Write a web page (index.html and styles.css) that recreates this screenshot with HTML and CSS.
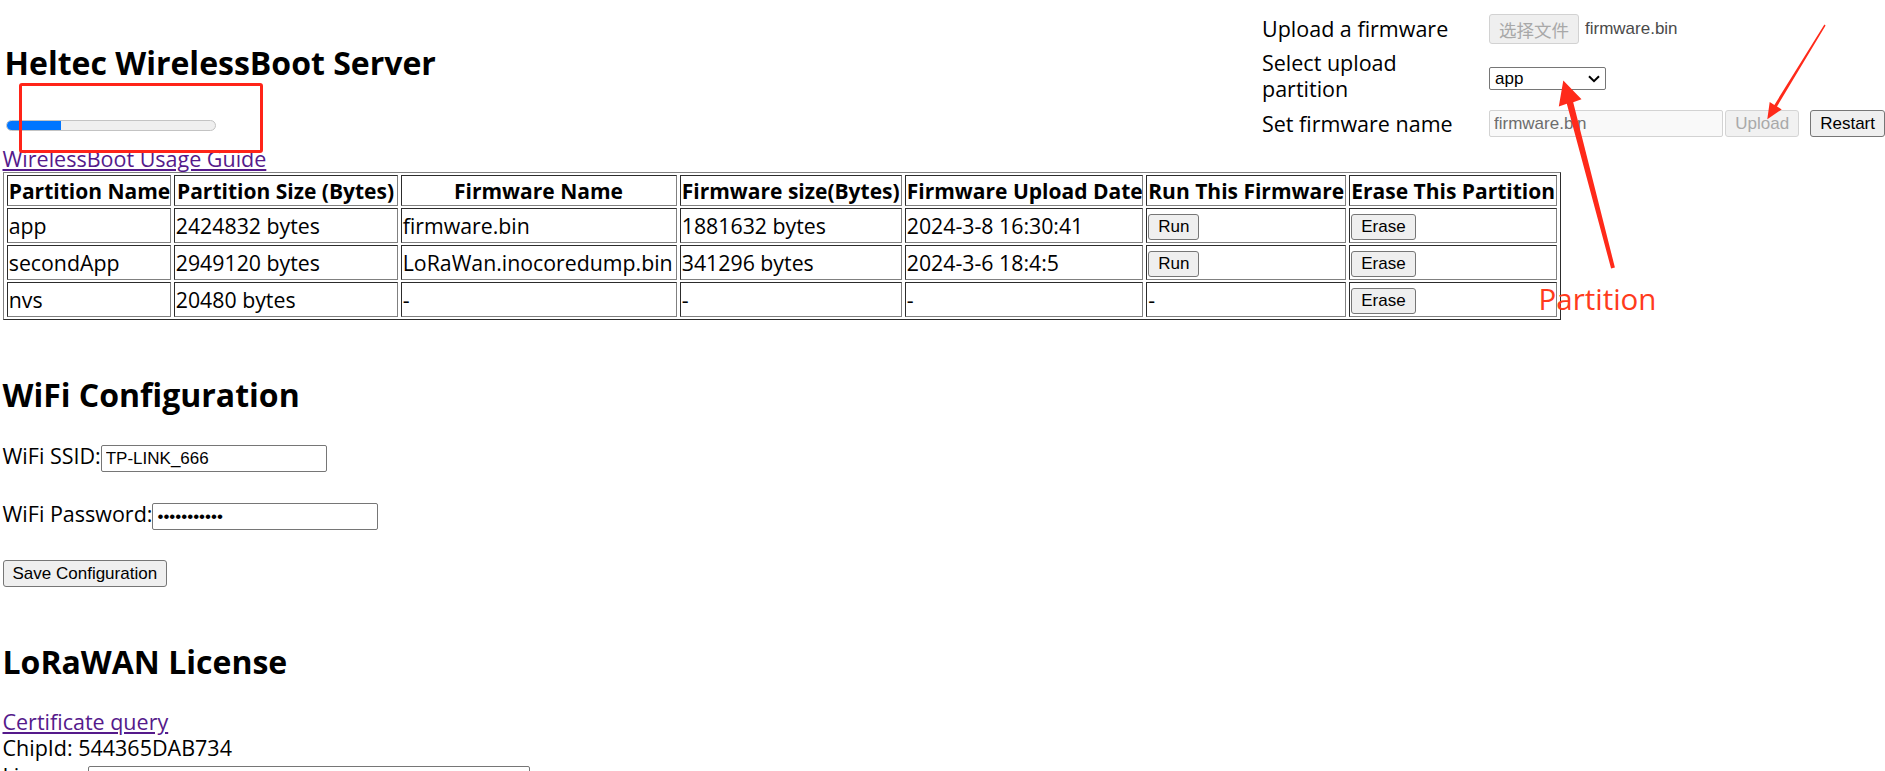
FILE: index.html
```html
<!DOCTYPE html>
<html lang="en">
<head>
<meta charset="utf-8">
<title>Heltec WirelessBoot Server</title>
<link rel="stylesheet" href="styles.css">
</head>
<body>
<div class="page">
  <div class="upload-panel">
    <div class="panel-label">Upload a firmware</div>
    <div class="panel-ctrl">
      <button class="btn-file" disabled>选择文件</button>
      <span class="file-name">firmware.bin</span>
    </div>
    <div class="panel-label">Select upload partition</div>
    <div class="panel-ctrl">
      <span class="select-wrap">
        <select class="partition-select">
          <option>app</option>
          <option>secondApp</option>
        </select>
        <svg class="select-chevron" width="12" height="8" viewBox="0 0 12 8" xmlns="http://www.w3.org/2000/svg"><path d="M1 1.2 L6 6.2 L11 1.2" fill="none" stroke="#000" stroke-width="2"/></svg>
      </span>
    </div>
    <div class="panel-label">Set firmware name</div>
    <div class="panel-ctrl">
      <input class="fw-name" type="text" value="firmware.bin" disabled>
      <button class="btn btn-disabled btn-upload" disabled>Upload</button>
      <button class="btn btn-restart">Restart</button>
    </div>
  </div>

  <h1 class="title">Heltec WirelessBoot Server</h1>
  <div class="progress"><div class="progress-fill" style="width: 26%"></div></div>
  <div class="link-row guide-row"><a class="link" href="#">WirelessBoot Usage Guide</a></div>

  <table class="partitions">
    <thead>
      <tr>
        <th>Partition Name</th>
        <th>Partition Size (Bytes)</th>
        <th>Firmware Name</th>
        <th>Firmware size(Bytes)</th>
        <th>Firmware Upload Date</th>
        <th>Run This Firmware</th>
        <th>Erase This Partition</th>
      </tr>
    </thead>
    <tbody>
      <tr>
        <td>app</td>
        <td>2424832 bytes</td>
        <td>firmware.bin</td>
        <td>1881632 bytes</td>
        <td>2024-3-8 16:30:41</td>
        <td><button class="btn">Run</button></td>
        <td><button class="btn">Erase</button></td>
      </tr>
      <tr>
        <td>secondApp</td>
        <td>2949120 bytes</td>
        <td>LoRaWan.inocoredump.bin</td>
        <td>341296 bytes</td>
        <td>2024-3-6 18:4:5</td>
        <td><button class="btn">Run</button></td>
        <td><button class="btn">Erase</button></td>
      </tr>
      <tr>
        <td>nvs</td>
        <td>20480 bytes</td>
        <td>-</td>
        <td>-</td>
        <td>-</td>
        <td>-</td>
        <td><button class="btn">Erase</button></td>
      </tr>
    </tbody>
  </table>

  <h2 class="section-title wifi-title">WiFi Configuration</h2>
  <div class="field field-ssid"><label>WiFi SSID:</label><input class="text-input" type="text" value="TP-LINK_666"></div>
  <div class="field field-pass"><label>WiFi Password:</label><input class="text-input" type="password" value="12345678901"></div>
  <button class="btn btn-save">Save Configuration</button>

  <h2 class="section-title lora-title">LoRaWAN License</h2>
  <div class="link-row cert-row"><a class="link" href="#">Certificate query</a></div>
  <div class="chip-row">ChipId: 544365DAB734</div>
  <div class="field field-license"><label>License: </label><input class="text-input license-input" type="text"></div>
</div>

<div class="annot-box"></div>
<svg class="annot-arrows" width="1885" height="771" viewBox="0 0 1885 771" xmlns="http://www.w3.org/2000/svg">
  <polygon points="1563.3,80.5 1581.5,99.3 1573.2,102.2 1614.9,267.5 1611.1,268.5 1566.8,103.8 1558.8,106.5" fill="#ff2a1a"/>
  <polygon points="1767.3,119.3 1781.7,109.4 1777,106.5 1825.6,25.4 1824.4,24.6 1774.4,104.9 1769.7,102" fill="#ff2a1a"/>
</svg>
<span class="annot-label">Partition</span>
</body>
</html>
```

FILE: styles.css
```css
html, body {
  margin: 0;
  padding: 0;
}

body {
  position: relative;
  font-family: "Open Sans", "Noto Sans CJK SC", sans-serif;
  font-size: 21.5px;
  line-height: 26px;
  color: #000;
  background: #fff;
}

.page {
  display: flow-root;
  padding-left: 2.5px;
}

/* ---------- upload panel (top right) ---------- */
.upload-panel {
  float: right;
  margin: 13px 0 0 0;
  display: grid;
  grid-template-columns: 227px 396px;
  grid-template-rows: 32px 62px 33px;
  align-items: center;
}

.panel-label {
  padding-right: 16px;
}

.panel-ctrl {
  display: flex;
  align-items: center;
}

.btn-file {
  width: 90px;
  height: 30px;
  padding: 0;
  margin: 0;
  font-family: "Noto Sans CJK SC", sans-serif;
  font-size: 17.5px;
  color: #a8a8a8;
  background: #efefef;
  border: 1px solid #d2d2d2;
  border-radius: 3px;
}

.file-name {
  margin-left: 6px;
  font-family: "Liberation Sans", Arial, sans-serif;
  font-size: 17px;
  color: #4a4a4a;
}

.select-wrap {
  position: relative;
  display: inline-block;
  margin-top: 4px;
}

.partition-select {
  display: block;
  box-sizing: border-box;
  width: 117px;
  height: 23px;
  margin: 0;
  padding: 0 20px 0 5px;
  appearance: none;
  -webkit-appearance: none;
  font-family: "Liberation Sans", Arial, sans-serif;
  font-size: 17px;
  color: #000;
  background: #fff;
  border: 1px solid #767676;
  border-radius: 2px;
}

.select-chevron {
  position: absolute;
  right: 6px;
  top: 8px;
  pointer-events: none;
}

.fw-name {
  box-sizing: border-box;
  width: 241px;
  height: 26.5px;
  margin: 0;
  padding: 1px 4px;
  font-family: "Liberation Sans", Arial, sans-serif;
  font-size: 17px;
  color: #6d6d6d;
  background: #f9f9f9;
  border: 1px solid #d3d3d3;
  border-radius: 2px;
}

/* ---------- buttons ---------- */
.btn {
  box-sizing: border-box;
  margin: 0;
  padding: 2.75px 9px;
  font-family: "Liberation Sans", Arial, sans-serif;
  font-size: 17px;
  line-height: 19px;
  color: #000;
  background: #efefef;
  border: 1px solid #767676;
  border-radius: 3px;
}

.btn-disabled {
  color: #a9a9a9;
  background: #f1f1f1;
  border-color: #d4d4d4;
}

.btn-upload {
  margin-left: 2px;
}

.btn-restart {
  margin-left: 11px;
}

/* ---------- header ---------- */
.title {
  margin: 40.6px 0 0 0;
  padding-left: 2px;
  font-size: 32px;
  line-height: 44px;
  font-weight: 700;
}

.progress {
  box-sizing: border-box;
  width: 210px;
  height: 11px;
  margin: 35.4px 0 0 3.5px;
  background: #efefef;
  border: 1px solid #c3c3c3;
  border-radius: 6px;
  overflow: hidden;
}

.progress-fill {
  height: 100%;
  background: #0075ff;
}

.link {
  color: #551a8b;
  text-decoration: underline;
}

.guide-row {
  margin-top: 14.85px;
}

/* ---------- partition table ---------- */
.partitions {
  table-layout: fixed;
  width: 1558.5px;
  margin: 0;
  border: 1px outset #808080;
  border-spacing: 3px 2.5px;
}

.partitions th,
.partitions td {
  box-sizing: border-box;
  padding: 1px 1.25px;
  border: 1px inset #808080;
  white-space: nowrap;
  overflow: hidden;
  text-align: left;
  vertical-align: middle;
}

.partitions td {
  font-size: 21.3px;
}

.partitions th {
  font-size: 21px;
  font-weight: 700;
  text-align: center;
}

.partitions thead tr {
  height: 31.5px;
}

.partitions tbody tr {
  height: 35px;
}

.partitions th:nth-child(1) { width: 164px; }
.partitions th:nth-child(2) { width: 224px; }
.partitions th:nth-child(3) { width: 276px; }
.partitions th:nth-child(4) { width: 222px; }
.partitions th:nth-child(5) { width: 238.5px; }
.partitions th:nth-child(6) { width: 200px; }
.partitions th:nth-child(7) { width: 208px; }

/* ---------- sections ---------- */
.section-title {
  margin: 0;
  font-size: 32px;
  line-height: 44px;
  font-weight: 700;
}

.wifi-title {
  margin-top: 52.6px;
}

.lora-title {
  margin-top: 53px;
}

.field {
  white-space: nowrap;
}

.field-ssid {
  margin-top: 26px;
}

.field-pass {
  margin-top: 28.5px;
}

.field-license {
  margin-top: 2px;
}

.text-input {
  box-sizing: border-box;
  width: 226px;
  height: 27px;
  margin: 0;
  padding: 1px 4px;
  font-family: "Liberation Sans", Arial, sans-serif;
  font-size: 17px;
  color: #000;
  background: #fff;
  border: 1px solid #767676;
  border-radius: 2px;
}

.license-input {
  width: 442px;
}

.btn-save {
  display: block;
  margin-top: 29.5px;
  height: 27.5px;
}

.cert-row {
  margin-top: 24.6px;
}

/* ---------- annotations drawn over the screenshot ---------- */
.annot-box {
  position: absolute;
  left: 19px;
  top: 83px;
  width: 244px;
  height: 70px;
  box-sizing: border-box;
  border: 3.5px solid #ff2418;
  border-radius: 3px;
}

.annot-arrows {
  position: absolute;
  left: 0;
  top: 0;
  pointer-events: none;
}

.annot-label {
  position: absolute;
  left: 1538.5px;
  top: 283.6px;
  font-family: "Open Sans", sans-serif;
  font-size: 29.5px;
  line-height: 30px;
  color: #ff3b1c;
  white-space: nowrap;
}
```
